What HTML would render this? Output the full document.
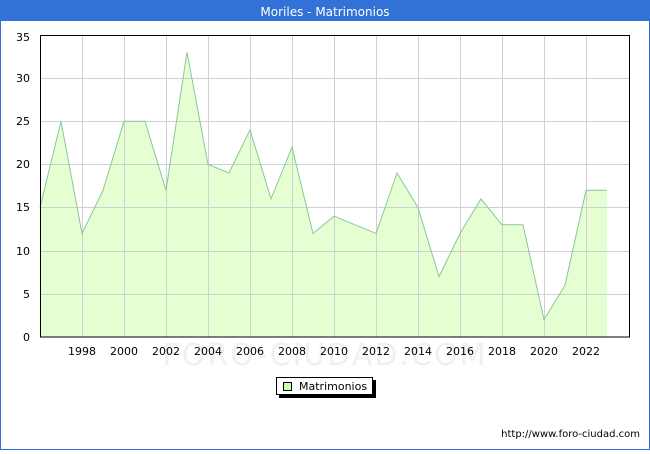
<!DOCTYPE html>
<html><head><meta charset="utf-8"><style>
body{margin:0;width:650px;height:450px;overflow:hidden;background:#fff;font-family:"DejaVu Sans","Liberation Sans",sans-serif}
</style></head><body>
<svg width="650" height="450" xmlns="http://www.w3.org/2000/svg" font-family="DejaVu Sans, Liberation Sans, sans-serif">
<rect x="0" y="0" width="650" height="450" fill="#fff"/>
<rect x="0.5" y="0.5" width="649" height="449" fill="none" stroke="#3272d6"/>
<rect x="0" y="0" width="650" height="21" fill="#3272d6"/>
<text x="325" y="16" fill="#fff" font-size="12" text-anchor="middle">Moriles - Matrimonios</text>
<text x="325" y="365" fill="#f0f0f0" font-size="30" text-anchor="middle" letter-spacing="2">FORO-CIUDAD.COM</text>
<polygon fill="#e6ffd2" points="40,337 40,207.6 61,121.3 82,233.5 103,190.3 124,121.3 145,121.3 166,190.3 187,52.2 208,164.4 229,173 250,129.9 271,198.9 292,147.2 313,233.5 334,216.2 355,224.8 376,233.5 397,173 418,207.6 439,276.6 460,233.5 481,198.9 502,224.8 523,224.8 544,319.7 565,285.2 586,190.3 607,190.3 607,337"/>
<g stroke="#d0d0d0" stroke-width="1">
<line x1="82.5" y1="35" x2="82.5" y2="337"/><line x1="124.5" y1="35" x2="124.5" y2="337"/><line x1="166.5" y1="35" x2="166.5" y2="337"/><line x1="208.5" y1="35" x2="208.5" y2="337"/><line x1="250.5" y1="35" x2="250.5" y2="337"/><line x1="292.5" y1="35" x2="292.5" y2="337"/><line x1="334.5" y1="35" x2="334.5" y2="337"/><line x1="376.5" y1="35" x2="376.5" y2="337"/><line x1="418.5" y1="35" x2="418.5" y2="337"/><line x1="460.5" y1="35" x2="460.5" y2="337"/><line x1="502.5" y1="35" x2="502.5" y2="337"/><line x1="544.5" y1="35" x2="544.5" y2="337"/><line x1="586.5" y1="35" x2="586.5" y2="337"/>
<line x1="40" y1="78.5" x2="630" y2="78.5"/><line x1="40" y1="121.5" x2="630" y2="121.5"/><line x1="40" y1="164.5" x2="630" y2="164.5"/><line x1="40" y1="207.5" x2="630" y2="207.5"/><line x1="40" y1="251.5" x2="630" y2="251.5"/><line x1="40" y1="294.5" x2="630" y2="294.5"/>
</g>
<polyline fill="none" stroke="#88c898" stroke-width="1" points="40,207.6 61,121.3 82,233.5 103,190.3 124,121.3 145,121.3 166,190.3 187,52.2 208,164.4 229,173 250,129.9 271,198.9 292,147.2 313,233.5 334,216.2 355,224.8 376,233.5 397,173 418,207.6 439,276.6 460,233.5 481,198.9 502,224.8 523,224.8 544,319.7 565,285.2 586,190.3 607,190.3"/>
<rect x="40.5" y="35.5" width="589" height="301.5" fill="none" stroke="#000"/>
<g font-size="11" fill="#000" text-anchor="end">
<text x="30" y="41">35</text><text x="30" y="82">30</text><text x="30" y="125">25</text><text x="30" y="168">20</text><text x="30" y="211">15</text><text x="30" y="255">10</text><text x="30" y="298">5</text><text x="30" y="341">0</text>
</g>
<g font-size="11" fill="#000" text-anchor="middle">
<text x="82" y="355">1998</text><text x="124" y="355">2000</text><text x="166" y="355">2002</text><text x="208" y="355">2004</text><text x="250" y="355">2006</text><text x="292" y="355">2008</text><text x="334" y="355">2010</text><text x="376" y="355">2012</text><text x="418" y="355">2014</text><text x="460" y="355">2016</text><text x="502" y="355">2018</text><text x="544" y="355">2020</text><text x="586" y="355">2022</text>
</g>
<rect x="279" y="380" width="97" height="18" fill="#000"/>
<rect x="276.5" y="377.5" width="96" height="17" fill="#fff" stroke="#000"/>
<rect x="283.5" y="382.5" width="8" height="8" fill="#ccffaa" stroke="#000"/>
<text x="299" y="390" font-size="11" fill="#000">Matrimonios</text>
<text x="640" y="437" font-size="10" fill="#000" text-anchor="end">http://www.foro-ciudad.com</text>
</svg>
</body></html>
